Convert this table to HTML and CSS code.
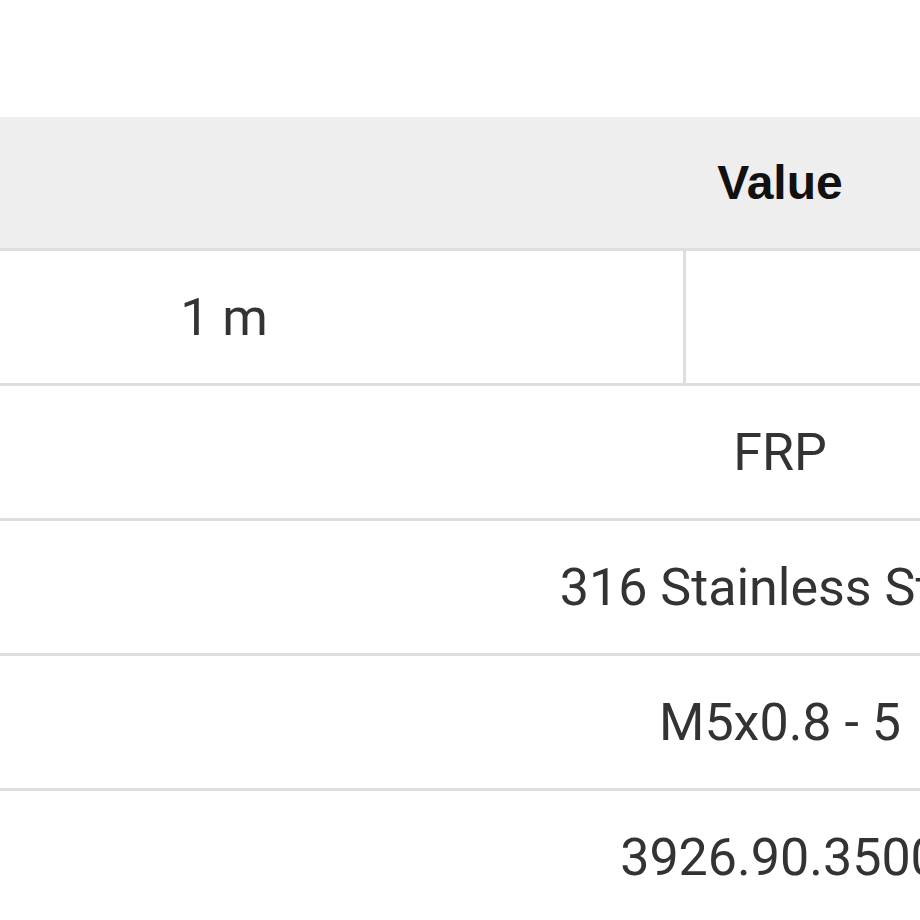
FILE: index.html
```html
<!DOCTYPE html>
<html>
<head>
<meta charset="utf-8">
<link rel="stylesheet" href="styles.css">
</head>
<body>
<div class="page">
  <div class="spec-table">
    <div class="row head">
      <div class="cell">Value</div>
    </div>
    <div class="row split">
      <div class="cell first">1 m</div>
      <div class="cell"></div>
    </div>
    <div class="row">
      <div class="cell">FRP</div>
    </div>
    <div class="row">
      <div class="cell">316 Stainless Steel</div>
    </div>
    <div class="row">
      <div class="cell">M5x0.8 - 5</div>
    </div>
    <div class="row">
      <div class="cell">3926.90.3500</div>
    </div>
  </div>
</div>
</body>
</html>
```
FILE: styles.css
```css
html, body {
  margin: 0;
  padding: 0;
  background: #ffffff;
  overflow: hidden;
}
.page {
  width: 920px;
  height: 920px;
  overflow: hidden;
  padding-top: 117px;
  box-sizing: border-box;
}
.spec-table {
  width: 1560px;
  display: flex;
  flex-direction: column;
}
.row {
  display: flex;
  height: 132px;
  border-bottom: 3px solid #dedede;
}
.row .cell {
  flex: 1;
  display: flex;
  align-items: center;
  justify-content: center;
  white-space: nowrap;
  font-family: Roboto, "Liberation Sans", sans-serif;
  font-size: 52px;
  color: #333333;
}
.row.head {
  height: 131px;
  background: #eeeeee;
}
.row.head .cell {
  font-family: "Liberation Sans", Arial, sans-serif;
  font-weight: bold;
  font-size: 48px;
  color: #111111;
}
.row.split .cell.first {
  flex: 0 0 686px;
  padding-right: 235px;
  box-sizing: border-box;
  border-right: 3px solid #dedede;
}
```
